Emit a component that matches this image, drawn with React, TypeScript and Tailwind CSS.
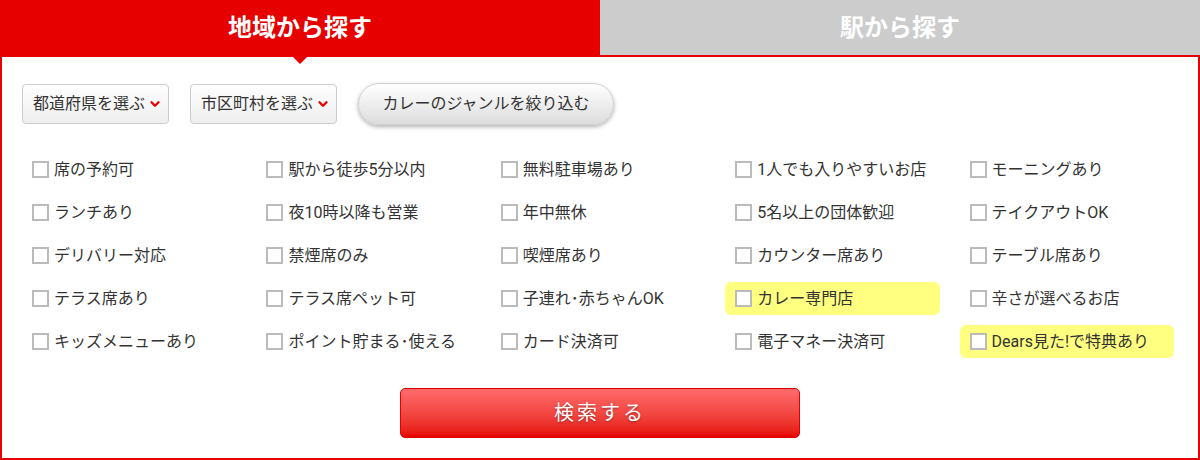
import { ChevronDown } from "lucide-react";

const options = [
  "席の予約可",
  "駅から徒歩5分以内",
  "無料駐車場あり",
  "1人でも入りやすいお店",
  "モーニングあり",
  "ランチあり",
  "夜10時以降も営業",
  "年中無休",
  "5名以上の団体歓迎",
  "テイクアウトOK",
  "デリバリー対応",
  "禁煙席のみ",
  "喫煙席あり",
  "カウンター席あり",
  "テーブル席あり",
  "テラス席あり",
  "テラス席ペット可",
  "子連れ･赤ちゃんOK",
  "カレー専門店",
  "辛さが選べるお店",
  "キッズメニューあり",
  "ポイント貯まる･使える",
  "カード決済可",
  "電子マネー決済可",
  "Dears見た!で特典あり",
];

const highlighted = ["カレー専門店", "Dears見た!で特典あり"];

const SelectBox = ({ label }: { label: string }) => (
  <button className="flex h-10 w-[147px] items-center justify-between rounded-[4px] border border-[#cccccc] bg-gradient-to-b from-white to-[#eeeeee] pl-[10px] pr-[6px] text-[16px] text-[#333333]">
    <span>{label}</span>
    <ChevronDown size={14} strokeWidth={4} className="text-[#e60000]" />
  </button>
);

export default function App() {
  return (
    <div className="w-[1200px] h-[460px] bg-white font-['Roboto','Noto_Sans_CJK_JP',sans-serif]">
      {/* Tabs */}
      <div className="relative z-10 -mb-[2px] flex h-[57px] items-start">
        <div className="relative flex h-[57px] w-[600px] items-center justify-center bg-[#e60000] pb-[2px] text-[24px] font-bold text-white">
          地域から探す
          <span className="absolute left-[293px] top-[57px] h-0 w-0 border-x-[7px] border-t-[7px] border-x-transparent border-t-[#e60000]" />
        </div>
        <div className="flex h-[55px] w-[600px] items-center justify-center bg-[#cccccc] text-[24px] font-bold text-white">
          駅から探す
        </div>
      </div>

      {/* Panel */}
      <div className="h-[405px] border-2 border-[#e60000] pl-[20px] pr-[24px] pt-[26px]">
        <div className="flex items-center gap-[21px]">
          <SelectBox label="都道府県を選ぶ" />
          <SelectBox label="市区町村を選ぶ" />
          <button className="h-[42px] w-[256px] rounded-full border border-[#d0d0d0] bg-gradient-to-b from-white to-[#dddddd] text-[16px] text-[#333333] shadow-[0_2px_4px_rgba(0,0,0,0.3)]">
            カレーのジャンルを絞り込む
          </button>
        </div>

        <div className="mt-[28px] grid grid-cols-5 gap-x-[20px] gap-y-[10px]">
          {options.map((item) => (
            <label
              key={item}
              className={
                "flex h-[33px] items-center gap-[5px] rounded-[6px] px-[10px] text-[16px] text-[#333333] " +
                (highlighted.includes(item) ? "bg-[#ffff80]" : "")
              }
            >
              <span className="h-[17px] w-[17px] shrink-0 border-2 border-[#bbbbbb] bg-white" />
              <span>{item}</span>
            </label>
          ))}
        </div>

        <div className="mt-[30px] flex justify-center pl-[4px]">
          <button className="h-[50px] w-[400px] rounded-[5px] border border-[#e00000] bg-gradient-to-b from-[#ff6b6b] to-[#e60000] text-[20px] tracking-[3px] text-white [text-shadow:0_1px_2px_rgba(0,0,0,0.35)]">
            検索する
          </button>
        </div>
      </div>
    </div>
  );
}
